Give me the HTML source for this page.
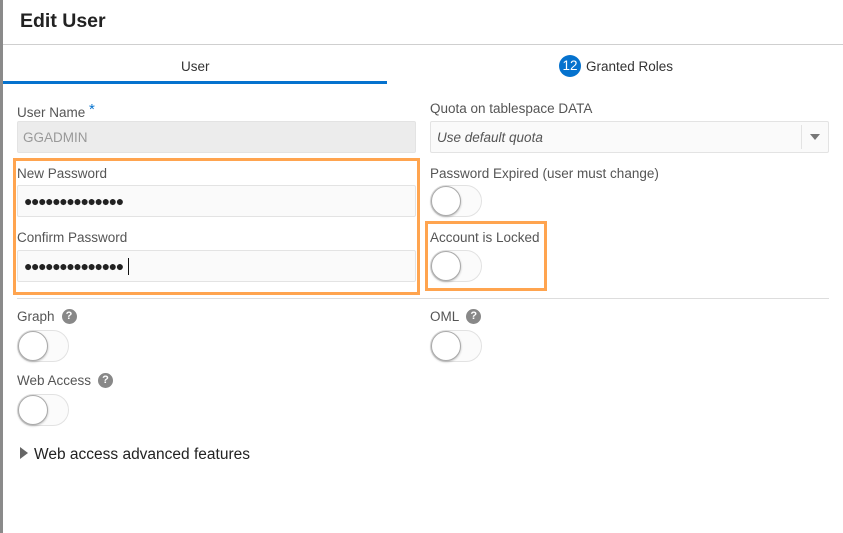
<!DOCTYPE html>
<html><head><style>
body{margin:0;width:843px;height:533px;background:#fff;position:relative;overflow:hidden;font-family:"Liberation Sans",sans-serif;color:#333}
.a{position:absolute}
.lbl{position:absolute;font-size:13.5px;color:#555}
.inp{position:absolute;box-sizing:border-box;background:#fafafa;border:1px solid #e3e3e3;border-radius:2px}
.tg{position:absolute;width:52px;height:32px;box-sizing:border-box;border:1px solid #e2e2e2;border-radius:16px;background:#fbfbfb}
.tg:after{content:"";position:absolute;left:0;top:0;width:28px;height:28px;border-radius:50%;border:1.5px solid #aaa;background:#fff;box-shadow:0 1px 2px rgba(0,0,0,.25)}
.q{display:inline-block;width:15px;height:15px;border-radius:50%;background:#888;color:#fff;font-size:11px;font-weight:bold;text-align:center;line-height:15px;vertical-align:2px;margin-left:7px}
.dots{position:absolute;left:6px;top:7px;font-size:14px;letter-spacing:-1.4px;color:#222}
</style></head><body>
<div class="a" style="left:0;top:0;width:3px;height:533px;background:#8a8a8a"></div>
<div class="a" style="left:20px;top:10px;font-size:19.5px;font-weight:bold;color:#222">Edit User</div>
<div class="a" style="left:3px;top:44px;width:840px;height:1px;background:#cfcfcf"></div>
<div class="a" style="left:181px;top:59px;font-size:13.5px;color:#333">User</div>
<div class="a" style="left:3px;top:81px;width:384px;height:3px;background:#0572ce"></div>
<div class="a" style="left:559px;top:55px;width:22px;height:22px;border-radius:50%;background:#0572ce;color:#fff;font-size:13.5px;text-align:center;line-height:22px">12</div>
<div class="a" style="left:586px;top:59px;font-size:13.5px;color:#333">Granted Roles</div>

<div class="lbl" style="left:17px;top:101px">User Name <span style="color:#0572ce;font-size:15px;vertical-align:3px">*</span></div>
<div class="inp" style="left:17px;top:121px;width:399px;height:32px;background:#ececec"></div>
<div class="a" style="left:23px;top:130px;font-size:13.5px;color:#999">GGADMIN</div>

<div class="a" style="left:13px;top:158px;width:407px;height:137px;box-sizing:border-box;border:3px solid #ffa44f"></div>
<div class="lbl" style="left:17px;top:166px">New Password</div>
<div class="inp" style="left:17px;top:185px;width:399px;height:32px"><span class="dots">●●●●●●●●●●●●●●</span></div>
<div class="lbl" style="left:17px;top:230px">Confirm Password</div>
<div class="inp" style="left:17px;top:250px;width:399px;height:32px"><span class="dots">●●●●●●●●●●●●●●</span><span class="a" style="left:110px;top:7px;width:1px;height:17px;background:#111"></span></div>

<div class="lbl" style="left:430px;top:101px">Quota on tablespace DATA</div>
<div class="inp" style="left:430px;top:121px;width:399px;height:32px"></div>
<div class="a" style="left:437px;top:130px;font-size:13.5px;color:#555;font-style:italic">Use default quota</div>
<div class="a" style="left:801px;top:125px;width:1px;height:24px;background:#e3e3e3"></div>
<div class="a" style="left:810px;top:134px;border-left:5px solid transparent;border-right:5px solid transparent;border-top:6px solid #777"></div>
<div class="lbl" style="left:430px;top:166px">Password Expired (user must change)</div>
<div class="tg" style="left:430px;top:185px"></div>
<div class="a" style="left:425px;top:221px;width:122px;height:70px;box-sizing:border-box;border:3px solid #ffa44f"></div>
<div class="lbl" style="left:430px;top:230px">Account is Locked</div>
<div class="tg" style="left:430px;top:250px"></div>

<div class="a" style="left:17px;top:298px;width:812px;height:1px;background:#ddd"></div>
<div class="lbl" style="left:17px;top:309px">Graph<span class="q">?</span></div>
<div class="tg" style="left:17px;top:330px"></div>
<div class="lbl" style="left:430px;top:309px">OML<span class="q">?</span></div>
<div class="tg" style="left:430px;top:330px"></div>
<div class="lbl" style="left:17px;top:373px">Web Access<span class="q">?</span></div>
<div class="tg" style="left:17px;top:394px"></div>
<div class="a" style="left:20px;top:447px;border-top:6px solid transparent;border-bottom:6px solid transparent;border-left:8px solid #666"></div>
<div class="a" style="left:34px;top:446px;font-size:15.5px;color:#222">Web access advanced features</div>
</body></html>
